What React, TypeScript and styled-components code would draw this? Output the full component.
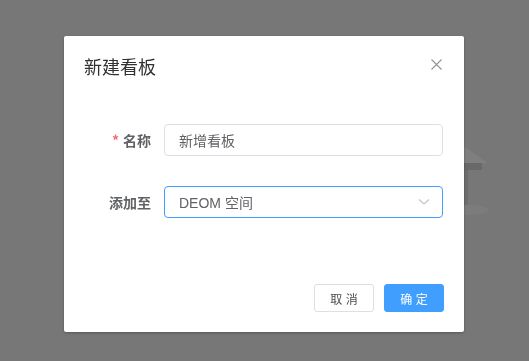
import React, { useState } from 'react';
import styled, { createGlobalStyle } from 'styled-components';

const GlobalStyle = createGlobalStyle`
  html, body {
    margin: 0;
    padding: 0;
    width: 100%;
    height: 100%;
    overflow: hidden;
  }
  body {
    font-family: "Helvetica Neue", "Liberation Sans", "Noto Sans CJK SC", sans-serif;
    background: #efefef;
  }
  * {
    box-sizing: border-box;
  }
`;

const Page = styled.div`
  position: relative;
  width: 100vw;
  height: 100vh;
  background: #efefef;
`;

const Illustration = styled.svg`
  position: absolute;
  left: 420px;
  top: 130px;
`;

const Overlay = styled.div`
  position: fixed;
  inset: 0;
  background-color: rgba(0, 0, 0, 0.5);
  display: flex;
  justify-content: flex-start;
  align-items: flex-start;
  padding: 36px 0 0 64px;
`;

const Dialog = styled.div`
  width: 400px;
  height: 296px;
  background: #ffffff;
  border-radius: 2px;
  box-shadow: 0 1px 3px rgba(0, 0, 0, 0.3);
  display: flex;
  flex-direction: column;
`;

const Header = styled.div`
  position: relative;
  padding: 20px 20px 10px;
`;

const Title = styled.span`
  display: block;
  font-size: 18px;
  line-height: 24px;
  color: #303133;
`;

const CloseButton = styled.button`
  position: absolute;
  top: 20px;
  right: 20px;
  width: 16px;
  height: 16px;
  padding: 0;
  border: none;
  background: none;
  cursor: pointer;
  display: flex;
  align-items: center;
  justify-content: center;
  color: #909399;
`;

const Body = styled.div`
  padding: 34px 20px 0;
  display: flex;
  flex-direction: column;
  gap: 30px;
  flex: 1;
`;

const FormItem = styled.div`
  display: flex;
  align-items: center;
`;

const Label = styled.label`
  width: 80px;
  padding-right: 13px;
  text-align: right;
  font-size: 14px;
  font-weight: 700;
  color: #606266;
  font-family: "Noto Sans CJK SC", sans-serif;
  line-height: 32px;
`;

const Required = styled.span`
  color: #f56c6c;
  margin-right: 4px;
`;

const Field = styled.div<{ $focused?: boolean }>`
  position: relative;
  width: 279px;
  height: 32px;
  border: 1px solid ${p => (p.$focused ? '#409eff' : '#dcdfe6')};
  border-radius: 4px;
  display: flex;
  align-items: center;
  padding: 0 14px;
`;

const FieldInput = styled.input`
  border: none;
  outline: none;
  width: 100%;
  background: transparent;
  font-size: 14px;
  color: #606266;
  font-family: "Liberation Sans", "Noto Sans CJK SC", sans-serif;
  padding: 0;
`;

const Arrow = styled.svg`
  flex: none;
  margin-right: -2px;
`;

const Footer = styled.div`
  display: flex;
  justify-content: flex-end;
  gap: 10px;
  padding: 0 20px 20px;
`;

const Button = styled.button<{ $primary?: boolean }>`
  width: 60px;
  height: 28px;
  border-radius: 3px;
  font-size: 12px;
  font-family: "Liberation Sans", "Noto Sans CJK SC", sans-serif;
  cursor: pointer;
  border: 1px solid ${p => (p.$primary ? '#409eff' : '#dcdfe6')};
  background: ${p => (p.$primary ? '#409eff' : '#ffffff')};
  color: ${p => (p.$primary ? '#ffffff' : '#4a4c50')};
  white-space: pre;
  padding: 0;
`;

export default function App() {
  const [name, setName] = useState('新增看板');
  const [space, setSpace] = useState('DEOM 空间');

  return (
    <>
      <GlobalStyle />
      <Page>
        <Illustration width="80" height="90" viewBox="0 0 80 90">
          <path d="M30 6 L67 33 L30 33 Z" fill="#ffffff" />
          <rect x="20" y="33" width="42" height="7" fill="#d2d2d2" />
          <rect x="44" y="40" width="4" height="40" fill="#dcdcdc" />
          <ellipse cx="46" cy="80" rx="22" ry="5" fill="#f8f8f8" />
        </Illustration>
        <Overlay>
          <Dialog>
            <Header>
              <Title>新建看板</Title>
              <CloseButton aria-label="close">
                <svg width="11" height="11" viewBox="0 0 11 11">
                  <path d="M0.5 0.5 L10.5 10.5 M10.5 0.5 L0.5 10.5" stroke="#909399" strokeWidth="1.1" />
                </svg>
              </CloseButton>
            </Header>
            <Body>
              <FormItem>
                <Label>
                  <Required>*</Required>名称
                </Label>
                <Field>
                  <FieldInput value={name} onChange={e => setName(e.target.value)} />
                </Field>
              </FormItem>
              <FormItem>
                <Label>添加至</Label>
                <Field $focused>
                  <FieldInput value={space} onChange={e => setSpace(e.target.value)} />
                  <Arrow width="12" height="8" viewBox="0 0 12 8">
                    <path d="M1 1.5 L6 6 L11 1.5" fill="none" stroke="#c0c4cc" strokeWidth="1.1" />
                  </Arrow>
                </Field>
              </FormItem>
            </Body>
            <Footer>
              <Button>{'取 消'}</Button>
              <Button $primary>{'确 定'}</Button>
            </Footer>
          </Dialog>
        </Overlay>
      </Page>
    </>
  );
}
